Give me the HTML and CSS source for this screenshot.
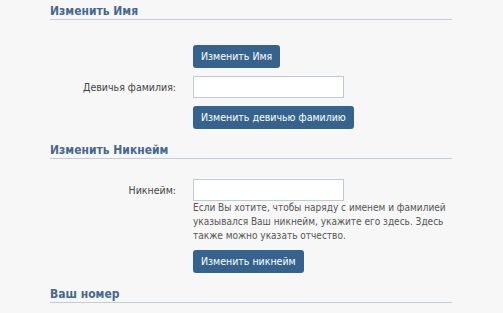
FILE: index.html
```html
<!DOCTYPE html>
<html lang="ru">
<head>
<meta charset="utf-8">
<link rel="stylesheet" href="styles.css">
</head>
<body>
<div class="page">
  <section class="section section-first">
    <h2 class="heading">Изменить Имя</h2>
    <div class="form">
      <div class="label"></div>
      <div class="field"><button class="btn">Изменить Имя</button></div>
      <label class="label">Девичья фамилия:</label>
      <div class="field"><input class="input" type="text"></div>
      <div class="label"></div>
      <div class="field"><button class="btn">Изменить девичью фамилию</button></div>
    </div>
  </section>
  <section class="section">
    <h2 class="heading">Изменить Никнейм</h2>
    <div class="form form-nick">
      <label class="label">Никнейм:</label>
      <div class="field"><input class="input" type="text"></div>
      <div class="label"></div>
      <div class="field">
        <p class="help">Если Вы хотите, чтобы наряду с именем и фамилией указывался Ваш никнейм, укажите его здесь. Здесь также можно указать отчество.</p>
      </div>
      <div class="label"></div>
      <div class="field"><button class="btn">Изменить никнейм</button></div>
    </div>
  </section>
  <section class="section">
    <h2 class="heading">Ваш номер</h2>
  </section>
</div>
</body>
</html>
```

FILE: styles.css
```css
html, body {
  margin: 0;
  padding: 0;
  background: #f7f7f7;
}
body {
  font-family: "DejaVu Sans Condensed", "DejaVu Sans", sans-serif;
  font-stretch: condensed;
  font-size: 10px;
  color: #000;
}
.page {
  width: 402px;
  margin-left: 50px;
  padding-top: 4px;
}
.heading {
  margin: 0;
  font-size: 12px;
  font-weight: bold;
  color: #45688e;
  line-height: 14px;
  padding-bottom: 1px;
  border-bottom: 1px solid #c3cbd8;
}
.section {
  margin-top: 14px;
}
.section-first {
  margin-top: 0;
}
.form {
  display: grid;
  grid-template-columns: 126px 1fr;
  column-gap: 17px;
  row-gap: 8px;
  align-items: center;
  padding-top: 25px;
}
.form-nick {
  padding-top: 20px;
  row-gap: 0;
}
.form-nick .btn {
  margin-top: 7px;
}
.label {
  text-align: right;
  color: #444;
  font-size: 10.5px;
}
.field {
  display: flex;
  flex-direction: column;
  align-items: flex-start;
}
.btn {
  font-family: inherit;
  font-stretch: condensed;
  font-size: 10.5px;
  color: #fff;
  background: #36638e;
  border: 0;
  border-radius: 3px;
  height: 23px;
  padding: 0 8px;
  line-height: 23px;
}
.input {
  box-sizing: border-box;
  width: 151px;
  height: 22px;
  border: 1px solid #c0cad5;
  background: #fff;
  margin: 0;
  padding: 0 3px;
}
.help {
  margin: 0;
  font-size: 10px;
  line-height: 14px;
  color: #555;
  width: 262px;
}
```
